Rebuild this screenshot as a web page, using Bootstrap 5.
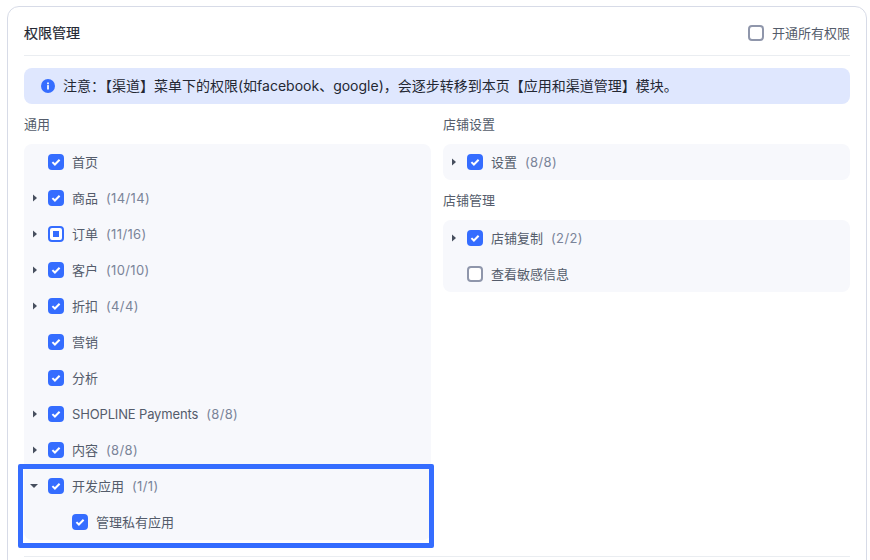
<!DOCTYPE html>
<html lang="zh-CN">
<head>
    <meta charset="UTF-8">
    <meta name="viewport" content="width=device-width, initial-scale=1.0">
    <title>权限管理</title>
    <link href="https://cdn.jsdelivr.net/npm/bootstrap@5.3.0/dist/css/bootstrap.min.css" rel="stylesheet">
    <style>
        body {
            font-family: Inter, "Noto Sans CJK SC", sans-serif;
            font-size: 13px;
            line-height: 20px;
            color: #545c6b;
            background: #fff;
            overflow: hidden;
            height: 560px;
        }
        .perm-card {
            position: relative;
            margin: 6px 3px 0 7px;
            padding: 0 16px;
            border: 1px solid #d7dbe7;
            border-radius: 12px;
        }
        .perm-head {
            height: 49px;
            padding-top: 4px;
            border-bottom: 1px solid #eaedf1;
        }
        .perm-title {
            font-size: 14px;
            font-weight: 400;
            color: #242833;
            -webkit-text-stroke: 0.2px #242833;
        }
        .perm-note {
            height: 36px;
            margin-top: 12px;
            padding: 0 17px;
            border-radius: 8px;
            background: #dfe7fe;
            font-size: 14px;
            color: #242833;
        }
        .perm-cols {
            display: grid;
            grid-template-columns: 1fr 1fr;
            column-gap: 12px;
            padding-bottom: 16px;
            border-bottom: 1px solid #eaedf1;
            margin-bottom: 40px;
        }
        .perm-label {
            margin: 10px 0;
        }
        .perm-panel {
            border-radius: 8px;
            background: #f7f8fc;
        }
        .perm-row {
            height: 36px;
            padding-left: 8px;
        }
        .perm-row.sub-row {
            padding-left: 48px;
        }
        .perm-caret {
            flex: 0 0 16px;
            width: 16px;
        }
        .perm-open {
            margin-left: -2px;
        }
        .perm-box {
            flex: 0 0 16px;
            width: 16px;
            height: 16px;
            margin: 0 8px 0 0;
            border: 2px solid #8f96ab;
            border-radius: 4px;
            background-color: #fff;
            appearance: none;
        }
        .perm-box:checked {
            border-color: #356dff;
            background-color: #356dff;
            background-image: url("data:image/svg+xml,%3Csvg xmlns='http://www.w3.org/2000/svg' viewBox='0 0 12 12'%3E%3Cpath d='M2.4 6.1l2.5 2.4 4.7-4.8' fill='none' stroke='%23fff' stroke-width='2'/%3E%3C/svg%3E");
        }
        .perm-box.part {
            border-color: #356dff;
            background: linear-gradient(#356dff, #356dff) center / 6px 6px no-repeat #fff;
        }
        .perm-latin {
            letter-spacing: -0.15px;
        }
        .perm-count {
            margin-left: 8px;
            letter-spacing: 0.35px;
            color: #7a8499;
        }
        .perm-mark {
            position: absolute;
            left: 10px;
            top: 457px;
            width: 416px;
            height: 84px;
            border: 5px solid #356dff;
            border-radius: 2px;
            pointer-events: none;
        }
    </style>
</head>
<body>
    <div class="perm-card">
        <div class="perm-head d-flex align-items-center justify-content-between">
            <span class="perm-title">权限管理</span>
            <label class="d-flex align-items-center">
                <input class="perm-box" type="checkbox">
                <span>开通所有权限</span>
            </label>
        </div>

        <div class="perm-note d-flex align-items-center">
            <svg class="me-2 flex-shrink-0" width="14" height="14" viewBox="0 0 16 16">
                <circle cx="8" cy="8" r="8" fill="#356dff"/>
                <rect x="7" y="7" width="2" height="5" fill="#fff"/>
                <rect x="7" y="4" width="2" height="2" fill="#fff"/>
            </svg>
            <span>注意：【渠道】菜单下的权限(如facebook、google)，会逐步转移到本页【应用和渠道管理】模块。</span>
        </div>

        <div class="perm-cols">
            <div>
                <div class="perm-label">通用</div>
                <div class="perm-panel" id="leftPanel"></div>
            </div>
            <div>
                <div class="perm-label">店铺设置</div>
                <div class="perm-panel" id="rightA"></div>
                <div class="perm-label">店铺管理</div>
                <div class="perm-panel" id="rightB"></div>
            </div>
        </div>

        <div class="perm-mark"></div>
    </div>

    <script>
        // [label, count, caret: 0 none / 1 closed / 2 open, state, sub]
        function rowHtml(r) {
            var caret = '';
            if (r[2] === 1) caret = '<svg width="6" height="8" viewBox="0 0 6 8"><path d="M1 0.5l4 3.5-4 3.5z" fill="#474f5e"/></svg>';
            if (r[2] === 2) caret = '<svg class="perm-open" width="8" height="6" viewBox="0 0 8 6"><path d="M0 1h8l-4 4z" fill="#474f5e"/></svg>';
            var box = '<input class="perm-box ' + (r[3] === 'part' ? 'part' : '') + '" type="checkbox"' + (r[3] === 'on' ? ' checked' : '') + '>';
            var count = r[1] ? '<span class="perm-count">(' + r[1] + ')</span>' : '';
            var name = /^[A-Z]/.test(r[0]) ? '<span class="perm-latin">' + r[0] + '</span>' : '<span>' + r[0] + '</span>';
            return '<div class="perm-row d-flex align-items-center' + (r[4] ? ' sub-row' : '') + '">' +
                (r[4] ? '' : '<span class="perm-caret d-flex align-items-center">' + caret + '</span>') +
                box + name + count + '</div>';
        }
        function fill(id, rows) {
            document.getElementById(id).innerHTML = rows.map(rowHtml).join('');
        }
        fill('leftPanel', [
            ['首页', '', 0, 'on'],
            ['商品', '14/14', 1, 'on'],
            ['订单', '11/16', 1, 'part'],
            ['客户', '10/10', 1, 'on'],
            ['折扣', '4/4', 1, 'on'],
            ['营销', '', 0, 'on'],
            ['分析', '', 0, 'on'],
            ['SHOPLINE Payments', '8/8', 1, 'on'],
            ['内容', '8/8', 1, 'on'],
            ['开发应用', '1/1', 2, 'on'],
            ['管理私有应用', '', 0, 'on', true]
        ]);
        fill('rightA', [['设置', '8/8', 1, 'on']]);
        fill('rightB', [
            ['店铺复制', '2/2', 1, 'on'],
            ['查看敏感信息', '', 0, 'off']
        ]);
    </script>
    <script src="https://cdn.jsdelivr.net/npm/bootstrap@5.3.0/dist/js/bootstrap.bundle.min.js"></script>
</body>
</html>
